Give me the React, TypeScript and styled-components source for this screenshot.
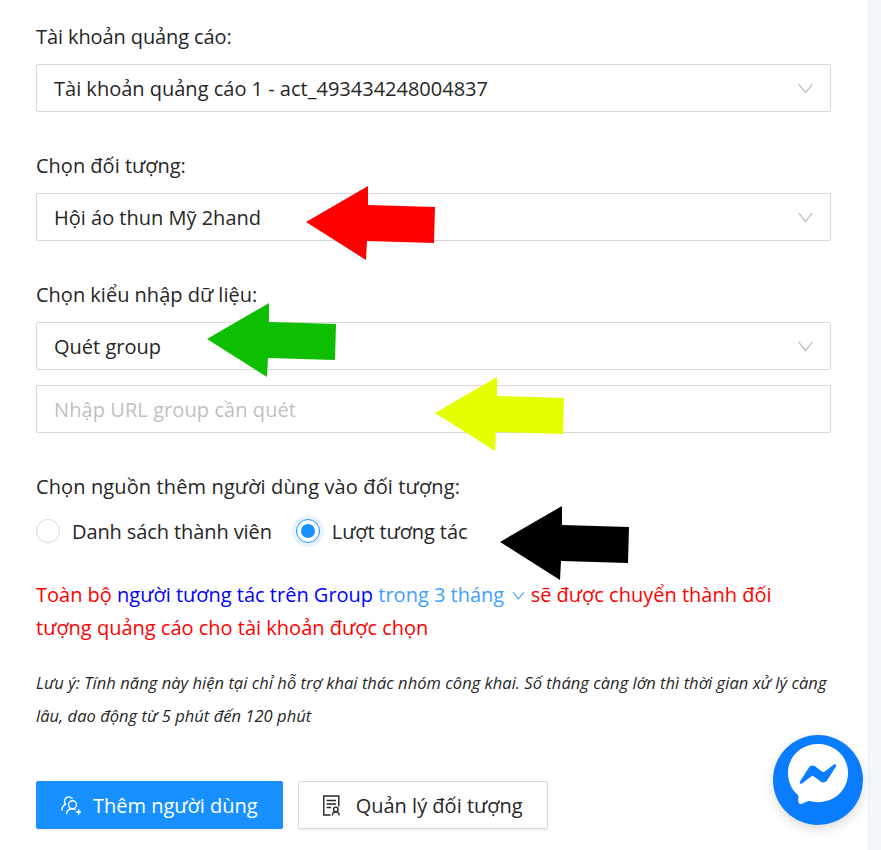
import React from 'react';
import styled, { createGlobalStyle } from 'styled-components';

const GlobalStyle = createGlobalStyle`
  html, body {
    margin: 0;
    padding: 0;
    background: #fff;
  }
  body {
    font-family: "Open Sans", "Noto Sans", "Liberation Sans", sans-serif;
    color: #262626;
  }
`;

const Page = styled.div`
  position: relative;
  width: 881px;
  height: 850px;
  overflow: hidden;
  display: grid;
  grid-template-columns: 868px 13px;
`;

const Content = styled.main`
  padding: 19px 37px 0 36px;
  display: flex;
  flex-direction: column;
`;

const Gutter = styled.div`
  background: #f5f8fa;
  border-left: 1px solid #eef1f3;
`;

const Label = styled.div<{ $gap?: number; $track?: number }>`
  font-size: 20px;
  line-height: 36px;
  letter-spacing: ${(p) => p.$track || 0}px;
  margin-top: ${(p) => p.$gap || 0}px;
  margin-bottom: 9px;
`;

const Field = styled.div<{ $gap?: number }>`
  height: 48px;
  box-sizing: border-box;
  border: 1px solid #d9d9d9;
  border-radius: 2px;
  padding: 0 17px;
  margin-top: ${(p) => p.$gap || 0}px;
  display: flex;
  align-items: center;
  justify-content: space-between;
  font-size: 20px;
  background: #fff;
`;

const Placeholder = styled.span`
  color: #bfbfbf;
  letter-spacing: 0.08px;
`;

const RadioRow = styled.div`
  display: flex;
  align-items: center;
  height: 34px;
  font-size: 20px;
  letter-spacing: -0.1px;
`;

const RadioItem = styled.label`
  display: flex;
  align-items: center;
  gap: 12px;
  margin-right: 24px;
`;

const RadioCircle = styled.span<{ $checked?: boolean }>`
  width: 24px;
  height: 24px;
  box-sizing: border-box;
  border-radius: 50%;
  border: 1px solid ${(p) => (p.$checked ? '#1890ff' : '#d9d9d9')};
  display: flex;
  align-items: center;
  justify-content: center;
  box-shadow: ${(p) => (p.$checked ? '0 0 0 4px #e8f4ff' : 'none')};
  &::after {
    content: '';
    display: ${(p) => (p.$checked ? 'block' : 'none')};
    width: 14px;
    height: 14px;
    border-radius: 50%;
    background: #1890ff;
  }
`;

const Summary = styled.p`
  margin: 30px 0 0;
  font-size: 20px;
  line-height: 33px;
  color: #ff0000;
`;

const Blue = styled.span`
  color: #0000ff;
`;

const Period = styled.span`
  color: #40a0ff;
  svg {
    margin: 0 0 0 3px;
    vertical-align: 2px;
  }
`;

const Note = styled.p`
  margin: 22px 0 0;
  font-size: 16.5px;
  line-height: 33px;
  letter-spacing: 0.04px;
  font-style: italic;
`;

const Actions = styled.div`
  display: flex;
  gap: 15px;
  margin-top: 49px;
`;

const Button = styled.button<{ $primary?: boolean }>`
  height: 48px;
  box-sizing: border-box;
  padding: 0 24px;
  display: flex;
  align-items: center;
  gap: ${(p) => (p.$primary ? 12 : 15)}px;
  font: inherit;
  font-size: 20px;
  border-radius: 2px;
  border: 1px solid ${(p) => (p.$primary ? '#1890ff' : '#d9d9d9')};
  background: ${(p) => (p.$primary ? '#1890ff' : '#fff')};
  color: ${(p) => (p.$primary ? '#fff' : '#262626')};
  box-shadow: 0 2px 0 rgba(0, 0, 0, 0.045);
`;

const Arrow = styled.svg<{ $x: number; $y: number }>`
  position: absolute;
  left: ${(p) => p.$x}px;
  top: ${(p) => p.$y}px;
  width: 130px;
  height: 75px;
`;

const Messenger = styled.div`
  position: absolute;
  left: 773px;
  top: 735px;
  width: 90px;
  height: 90px;
  border-radius: 50%;
  background: #0a7cff;
  box-shadow: 0 4px 12px rgba(0, 0, 0, 0.15);
  display: flex;
  align-items: center;
  justify-content: center;
`;

function ArrowMark({ x, y, color }: { x: number; y: number; color: string }) {
  return (
    <Arrow $x={x} $y={y - 37} viewBox="0 0 130 75">
      <polygon points="0,37 62,1 62,20 129,22 128,58 61,56 60,75" fill={color} />
    </Arrow>
  );
}

function Chevron({ w = 15, h = 11, color = '#bfbfbf' }: { w?: number; h?: number; color?: string }) {
  return (
    <svg width={w} height={h} viewBox="0 0 15 11" fill="none">
      <polyline points="0.7,1.2 7.5,9.6 14.3,1.2" stroke={color} strokeWidth="1.3" />
    </svg>
  );
}

function UserPlusIcon() {
  return (
    <svg width="20" height="21" viewBox="0 0 20 21" fill="none" stroke="#fff" strokeWidth="1.4" strokeLinecap="round">
      <path d="M4.6 9.2A4.2 4.2 0 1 1 11 3.4" />
      <path d="M4.6 9.2C2.6 10.2 1.2 12 0.7 15" />
      <circle cx="11.5" cy="9.8" r="4" />
      <path d="M5.6 18.5C6 15.8 8.2 13.8 11.5 13.8C12.6 13.8 13.6 14 14.4 14.4" />
      <path d="M15.4 17H19.8M17.6 14.8V19.2" />
    </svg>
  );
}

function CertificateIcon() {
  return (
    <svg width="18" height="21" viewBox="0 0 18 21" fill="none" stroke="#262626" strokeWidth="1.4">
      <path d="M7.5 20H0.8V1H15.8V11.5" />
      <path d="M3.6 5.5H13M3.6 9H13M3.6 12.5H8" />
      <circle cx="12.8" cy="14.4" r="2.3" />
      <path d="M9.4 20.6C9.4 18.2 10.8 16.9 12.8 16.9C14.8 16.9 16.2 18.2 16.2 20.6" />
    </svg>
  );
}

function MessengerIcon() {
  return (
    <svg width="72" height="72" viewBox="0 2 24 24">
      <path
        fill="#fff"
        fillRule="evenodd"
        d="M12 2C6.36 2 2 6.13 2 11.7c0 2.91 1.19 5.44 3.14 7.17.16.14.26.35.27.57l.05 1.78c.02.57.61.94 1.13.71l1.98-.87c.17-.07.36-.09.53-.05.91.25 1.88.39 2.9.39 5.64 0 10-4.13 10-9.7S17.64 2 12 2zm6 7.46l-2.94 4.66c-.47.74-1.47.93-2.17.4l-2.34-1.75a.6.6 0 0 0-.72 0l-3.16 2.4c-.42.32-.97-.18-.69-.63l2.94-4.66c.47-.74 1.47-.93 2.17-.4l2.34 1.75c.22.16.5.16.72 0l3.16-2.4c.42-.32.97.18.69.63z"
      />
    </svg>
  );
}

export default function App() {
  return (
    <Page>
      <GlobalStyle />
      <Content>
        <Label $track={-0.1}>Tài khoản quảng cáo:</Label>
        <Field>
          <span>Tài khoản quảng cáo 1 - act_493434248004837</span>
          <Chevron />
        </Field>
        <Label $gap={36}>Chọn đối tượng:</Label>
        <Field>
          <span>Hội áo thun Mỹ 2hand</span>
          <Chevron />
        </Field>
        <Label $gap={36}>Chọn kiểu nhập dữ liệu:</Label>
        <Field>
          <span>Quét group</span>
          <Chevron />
        </Field>
        <Field $gap={15}>
          <Placeholder>Nhập URL group cần quét</Placeholder>
        </Field>
        <Label $gap={36} $track={0.12}>
          Chọn nguồn thêm người dùng vào đối tượng:
        </Label>
        <RadioRow>
          <RadioItem>
            <RadioCircle />
            Danh sách thành viên
          </RadioItem>
          <RadioItem>
            <RadioCircle $checked />
            Lượt tương tác
          </RadioItem>
        </RadioRow>
        <Summary>
          Toàn bộ <Blue>người tương tác trên Group</Blue>{' '}
          <Period>
            trong 3 tháng <Chevron w={13} h={9} color="#40a0ff" />
          </Period>{' '}
          sẽ được chuyển thành đối
          <br />
          tượng quảng cáo cho tài khoản được chọn
        </Summary>
        <Note>
          Lưu ý: Tính năng này hiện tại chỉ hỗ trợ khai thác nhóm công khai. Số tháng càng lớn thì thời gian xử lý càng
          <br />
          lâu, dao động từ 5 phút đến 120 phút
        </Note>
        <Actions>
          <Button $primary>
            <UserPlusIcon />
            Thêm người dùng
          </Button>
          <Button>
            <CertificateIcon />
            Quản lý đối tượng
          </Button>
        </Actions>
      </Content>
      <Gutter />
      <ArrowMark x={306} y={222} color="#ff0000" />
      <ArrowMark x={207} y={339} color="#0dbf00" />
      <ArrowMark x={435} y={413} color="#e4ff00" />
      <ArrowMark x={500} y={542} color="#000000" />
      <Messenger>
        <MessengerIcon />
      </Messenger>
    </Page>
  );
}
